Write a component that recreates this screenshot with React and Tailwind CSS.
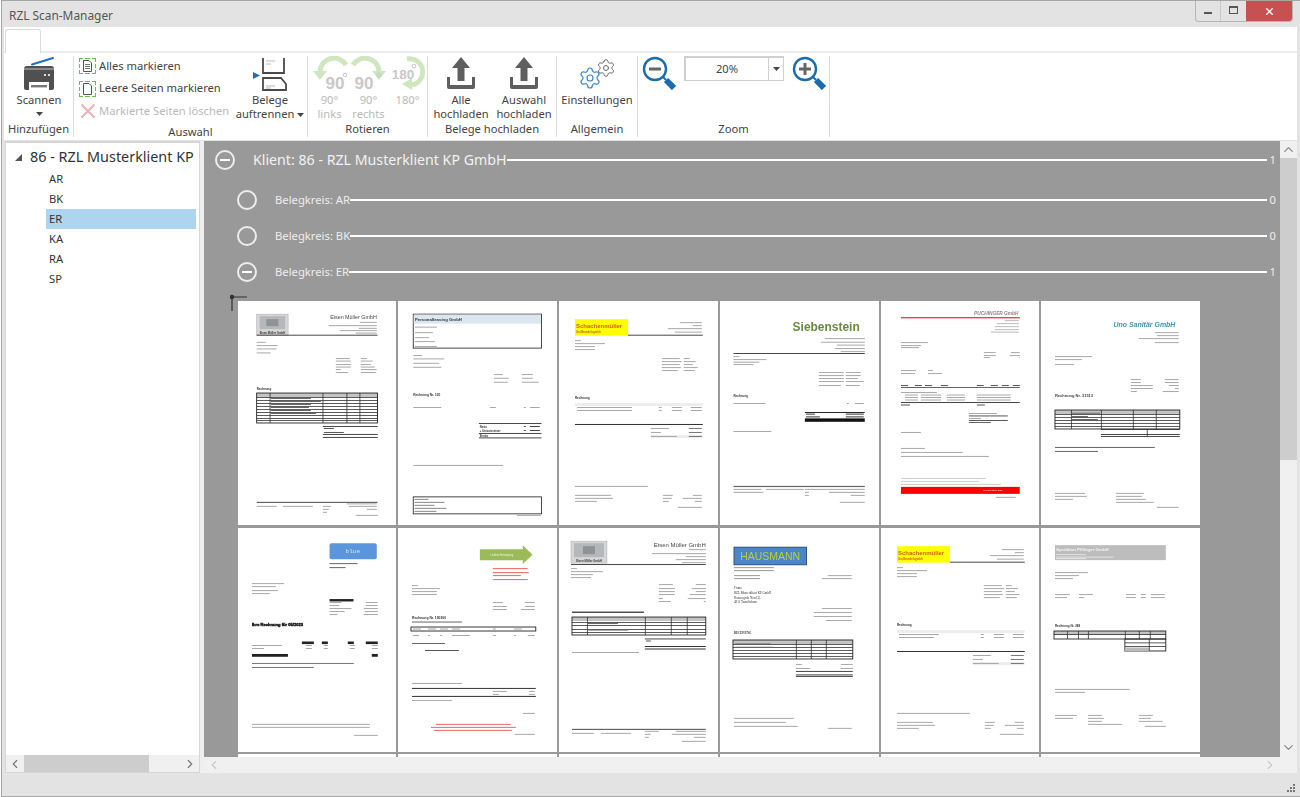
import React from "react";
import { ChevronUp, ChevronDown, ChevronLeft, ChevronRight, Settings, X } from "lucide-react";

/* ---------- thumbnail helpers ---------- */
const left = (x, rows, c = "#a8a8a8") =>
  rows.map(([y, w], i) => <rect key={`l${x}-${y}-${i}`} x={x} y={y} width={w} height={1} fill={c} />);
const right = (end, rows, c = "#a8a8a8") =>
  rows.map(([y, w], i) => <rect key={`r${end}-${y}-${i}`} x={end - w} y={y} width={w} height={1} fill={c} />);

const Hr = ({ x, y, w, h = 1, c = "#333" }) => <rect x={x} y={y} width={w} height={h} fill={c} />;

const Txt = ({ x, y, s = 4, c = "#333", a = "start", b, i, f, smudge, children }) => (
  <text
    x={x}
    y={y}
    fontSize={s}
    fill={c}
    stroke={smudge ? c : "none"}
    strokeWidth={smudge ? 0.4 : 0}
    textAnchor={a}
    fontWeight={b ? 700 : 400}
    fontStyle={i ? "italic" : "normal"}
    fontFamily={f || "Liberation Sans, sans-serif"}
  >
    {children}
  </text>
);

const Table = ({ x, y, w, h, cols, rows, head = 4, fill = "#c4c4c4" }) => (
  <g>
    <rect x={x} y={y} width={w} height={head} fill={fill} />
    {rows.map((r) => (
      <rect key={r} x={x} y={y + r} width={w} height={0.8} fill="#333" />
    ))}
    {cols.map((c) => (
      <rect key={c} x={x + c} y={y} width={0.8} height={h} fill="#333" />
    ))}
    <rect x={x} y={y} width={w} height={h} fill="none" stroke="#222" strokeWidth={0.9} />
  </g>
);

const MuellerLogo = ({ x, y, w, h }) => (
  <g>
    <rect x={x} y={y} width={w} height={h} fill="#d6d6d6" stroke="#aaa" strokeWidth={0.5} />
    <rect x={x + 3} y={y + 2} width={w - 6} height={h - 8} fill="#b5b8ba" />
    <rect x={x + w / 2 - 6} y={y + 5} width={12} height={h - 14} fill="#8f9396" />
    <Txt x={x + w / 2} y={y + h - 1.5} s={2.8} a="middle" b>Eisen Müller GmbH</Txt>
  </g>
);

const Schachen = ({ second }) => (
  <g>
    <rect x={16} y={18} width={53} height={16.5} fill="#ffff00" />
    <Txt x={17} y={27} s={6} c="#cc6000" b>Schachenmüller</Txt>
    <Txt x={17} y={32} s={2.8} c="#cc6000" b>Großhandelsgmbh</Txt>
    <Hr x={69} y={33.6} w={75} h={0.9} />
    {right(143, [[21, 22], [24, 9], [27, 34], [30.5, 27]])}
    {left(16, [[39, 6], [42, 30], [45, 20], [48, 20]])}
    {left(103, [[57, 18], [60, 20], [63, 18], [66, 19], [69, 16]])}
    {left(125, [[57, 6], [60, 12], [63, 9], [66, 14], [69, 11]])}
    <Txt x={16} y={98} s={3} b>Rechnung</Txt>
    <Hr x={16} y={102} w={128} h={3} c="#ededed" />
    {left(18, second ? [[106, 40], [109, 35]] : [[106, 55], [109, 55]])}
    {left(100, [[106, 3], [109, 3]])}
    {left(113, [[106, 10], [109, 10]])}
    {left(132, [[106, 11], [109, 11]])}
    <Hr x={16} y={123} w={128} h={1} />
    <Hr x={92} y={134} w={52} h={3} c="#ededed" />
    {left(92, [[127, 18], [131, 10], [135, 26]])}
    {left(130, [[127, 13], [131, 13], [135, 13]], "#777")}
    {left(16, [[185, 73]])}
    {left(16, [[194, 36], [197, 38], [200, 22]])}
    {left(104, [[194, 10], [197, 9], [200, 6]])}
    {right(143, [[194, 9], [197, 19], [200, 7]])}
    {right(143, [[206, 24]])}
  </g>
);

/* each page is a small drawing, coords are px inside the 159x224 sheet */
const PAGES = [
  <g key="p1">
    <MuellerLogo x={18.7} y={13} w={31.5} h={21} />
    <Txt x={139} y={17.5} s={5.4} a="end" c="#444">Eisen Müller GmbH</Txt>
    {right(139, [[20.7, 17], [24, 48], [26.7, 18], [29, 37], [31.5, 21]])}
    <Hr x={18.7} y={33.6} w={121} h={0.9} />
    {left(18.7, [[40.7, 9], [44, 21], [47.3, 20], [51.3, 14]])}
    {left(98, [[57, 14], [59.5, 15], [63, 15], [65.5, 15], [68, 5], [71, 12]])}
    {left(123, [[57, 6], [59.5, 12], [63, 10], [65.5, 14], [68, 16], [71, 15]])}
    <Txt x={18.7} y={89} s={3} b>Rechnung</Txt>
    <Table x={18.7} y={92} w={121} h={30} cols={[13, 66, 90, 103]} rows={[4, 7, 10, 13, 16, 19, 22, 25, 27]} />
    {left(33, [[97, 40], [100, 50], [103, 40], [106, 38], [109, 40], [112, 45]], "#666")}
    <Hr x={85} y={125} w={55} h={0.9} />
    {left(86, [[127, 10], [131, 20]], "#555")}
    <Hr x={85} y={133} w={55} h={0.9} />
    <Hr x={85} y={136} w={55} h={0.9} />
    <Hr x={18.7} y={201} w={121} h={0.9} />
    {left(18.7, [[205, 20]])}
    {left(45, [[205, 30]])}
    {left(85, [[205, 8], [208, 6], [211, 4]])}
    {right(139, [[202.5, 30], [205, 28], [208, 10]])}
    {right(140, [[214, 22]])}
  </g>,
  <g key="p2">
    <rect x={15.3} y={13} width={128.4} height={34} fill="#fff" stroke="#333" strokeWidth={0.9} />
    <rect x={15.8} y={13.5} width={127.4} height={9} fill="#dce6f1" />
    <Txt x={17} y={20} s={4.3} b>Personalleasing GmbH</Txt>
    {left(17, [[25.5, 22], [31, 18], [36, 14], [40, 20], [45, 22]])}
    {left(15.3, [[54, 9], [57.3, 31], [61.7, 26], [65.7, 28]])}
    {left(96, [[73, 9], [76.7, 15], [80.7, 14]])}
    {left(124, [[73, 11], [76.7, 11], [80.7, 17]])}
    <Txt x={15.3} y={95} s={3.2} b>Rechnung Nr. 320</Txt>
    {left(15.3, [[106, 28]])}
    {left(92, [[106, 6]])}
    {left(126, [[106, 2]])}
    {left(132, [[106, 10]])}
    <Hr x={81} y={122} w={62.7} h={0.9} />
    <Txt x={82} y={127} s={2.8} b>Netto</Txt>
    <Txt x={82} y={131} s={2.8} b>+ Umsatzsteuer</Txt>
    {left(126, [[125, 2], [129, 2]], "#444")}
    {left(132, [[125, 10], [129, 10]], "#444")}
    <Hr x={81} y={132} w={62.7} h={0.9} />
    <Hr x={81} y={136.5} w={62.7} h={0.9} />
    <Txt x={82} y={135.6} s={2.8} b>Brutto</Txt>
    {left(15.3, [[164, 90]])}
    <rect x={15.3} y={196} width={128.4} height={17} fill="#fff" stroke="#333" strokeWidth={0.9} />
    {left(16.5, [[198, 14], [201, 30], [204, 20], [207, 32], [210, 22]], "#888")}
    {right(143, [[214, 24]])}
  </g>,
  <g key="p3"><Schachen /></g>,
  <g key="p4">
    <Txt x={140} y={30} s={12} c="#6a8a45" a="end" b>Siebenstein</Txt>
    {right(145, [[37, 40], [40.6, 44], [43.5, 28], [47, 30], [50, 24]])}
    <Hr x={13.5} y={52} w={131.5} h={0.9} />
    {left(13.5, [[55, 6], [58, 33], [60.6, 26], [63, 20]])}
    {left(99, [[71, 25], [74, 25], [77, 25], [80, 25], [84, 22]])}
    {left(126, [[71, 15], [74, 15], [77, 12], [80, 18], [84, 14]])}
    <Txt x={13.5} y={96} s={3} b>Rechnung</Txt>
    {left(13.5, [[102, 32]])}
    {left(127, [[102, 2]])}
    {left(135, [[102, 9]])}
    <Hr x={85} y={111} w={60} h={0.9} c="#111" />
    {left(86, [[112.6, 9], [115.4, 14]], "#333")}
    {left(126, [[112.6, 18], [115.4, 18]], "#333")}
    <Hr x={85} y={117.4} w={60} h={3.4} c="#111" />
    {left(13.5, [[130, 38]])}
    <Hr x={13.5} y={185} w={131.5} h={1.2} c="#666" />
    {left(13.5, [[188, 28], [191, 30]])}
    {left(46, [[188, 38]])}
    {left(85, [[188, 22], [191, 4], [194, 4]])}
    {right(145, [[188, 38], [191, 36], [194, 14]])}
    {right(145, [[201, 25]])}
  </g>,
  <g key="p5">
    <Txt x={137.7} y={14} s={4.8} c="#888" a="end" b i>PUCHINGER GmbH</Txt>
    <Hr x={20} y={16} w={119} h={1.2} c="#ff2020" />
    {right(138, [[19, 14], [22, 22], [25, 24], [28, 24], [30.5, 28]], "#bbb")}
    {left(20, [[41, 27], [44, 20], [46, 18]])}
    {left(103, [[51, 12], [54, 12], [56, 6]])}
    {right(139, [[51, 9], [54, 10], [56, 1]])}
    {left(20, [[69, 15], [72, 14]])}
    {left(47, [[69, 5], [72, 14]])}
    {[20, 34, 44, 60, 96, 110, 121, 132].map((x) => (
      <rect key={x} x={x} y={84} width={7} height={1} fill="#555" />
    ))}
    <Hr x={20} y={86} w={119} h={0.9} c="#555" />
    {left(20, [[91, 36]])}
    {left(24, [[93.5, 13], [96, 13], [98.5, 13]])}
    {left(40, [[93.5, 20], [96, 20], [98.5, 20]])}
    {left(66, [[93.5, 18], [96, 18], [98.5, 18]])}
    {left(96, [[93.5, 34], [96, 34], [98.5, 34]])}
    <Hr x={20} y={101} w={119} h={1} c="#444" />
    {left(20, [[103.5, 9]], "#555")}
    {left(96, [[103.5, 8]], "#555")}
    {left(88, [[112, 28]])}
    <Hr x={88} y={114.5} w={39} h={0.9} c="#444" />
    {left(88, [[117, 12]])}
    <Hr x={88} y={119} w={39} h={0.9} c="#444" />
    {left(88, [[121, 22]], "#666")}
    {left(20, [[131, 20], [147, 24], [151, 62], [155, 88]])}
    {left(20, [[177, 85], [180, 78], [183, 100]], "#ccc")}
    <Hr x={20} y={186} w={119} h={7} c="#ff0000" />
    <Txt x={112} y={190.5} s={2} c="#fff" a="middle">Lieferant Online-Shop</Txt>
    {right(135, [[196, 20]])}
  </g>,
  <g key="p6">
    <Txt x={134.6} y={26} s={7} c="#3f94ad" a="end" b i>Uno Sanitär GmbH</Txt>
    {right(138, [[31, 24], [34, 22], [37, 40], [41, 24]])}
    {left(14, [[55, 37], [58, 27], [63, 19]])}
    {left(90, [[78, 10], [81, 10], [84, 22], [87, 22], [90, 6]])}
    {right(138, [[78, 14], [81, 14], [84, 10], [87, 4], [90, 16]])}
    <Txt x={14} y={96} s={4} b c="#444">Rechnung Nr. 31513</Txt>
    <Table x={14} y={109} w={125} h={19} cols={[16, 46, 78, 101]} rows={[4, 7, 10, 13, 16]} />
    {left(31, [[111.7, 28], [115, 16], [118, 26]], "#666")}
    <Hr x={60} y={128} w={79} h={0.9} />
    <Hr x={60} y={133} w={79} h={0.9} />
    <Hr x={60} y={135} w={79} h={0.9} />
    <Hr x={106} y={128} w={0.8} h={7} />
    {left(14, [[146, 100], [150, 43]], "#666")}
    {left(14, [[192, 30], [195, 32], [198, 18]])}
    {left(75, [[192, 28], [195, 26], [198, 30], [201, 38]])}
    {right(138, [[206, 22]])}
  </g>,
  <g key="p7">
    <rect x={91.7} y={15} width={47.3} height={16} rx={2} fill="#5b95dc" />
    <Txt x={115} y={25} s={6} c="#d6e6fa" a="middle" f="Liberation Mono, monospace">blue</Txt>
    {left(91.7, [[35, 28], [39, 16]], "#666")}
    {left(14, [[55, 32], [58, 24], [62, 26], [65, 18]])}
    <Hr x={91.7} y={71} w={24} h={2.4} c="#222" />
    {left(91.7, [[74, 12], [77, 10], [80, 22], [83, 15], [86, 8]])}
    {right(140, [[74, 12], [77, 12], [80, 14], [83, 13], [86, 14]])}
    <Txt x={14} y={98} s={4.1} c="#111" b smudge>Ihre Rechnung für 05/2023</Txt>
    {[64, 84, 110, 128].map((x) => (
      <rect key={x} x={x} y={113.5} width={x === 64 || x === 128 ? 12 : 6} height={2.6} fill="#222" />
    ))}
    {left(14, [[117, 30], [120, 12]])}
    {left(68, [[117, 6], [120, 6]])}
    {left(86, [[117, 4], [120, 4]])}
    {left(112, [[117, 5], [120, 5]])}
    {left(134, [[117, 6], [120, 6]])}
    <Hr x={14} y={126} w={36} h={2.8} c="#222" />
    <Hr x={134} y={126} w={6} h={2.8} c="#222" />
    {left(14, [[135, 102], [139, 62]], "#777")}
    {left(14, [[196, 118], [199, 118]])}
    {right(140, [[207, 24]])}
  </g>,
  <g key="p8">
    <polygon points="82,21 125,21 125,17 134.7,26.5 125,36 125,32 82,32" fill="#9bbb59" />
    <Txt x={104} y={28} s={2.6} c="#eef5de" a="middle">Lindner Entsorgung</Txt>
    {left(95, [[40, 35], [44, 36], [47, 28], [51, 35]], "#ee6666")}
    {left(14, [[57, 6], [60, 28], [63, 25], [66, 25]])}
    {left(95, [[74, 10], [78, 14], [81, 14]])}
    {right(137, [[74, 10], [78, 10], [81, 14]])}
    <Txt x={14} y={91} s={3.4} b>Rechnung Nr. 190300</Txt>
    {left(14, [[93.5, 50]], "#666")}
    <rect x={13} y={99} width={125} height={4} fill="#fff" stroke="#222" strokeWidth={0.9} />
    {left(15, [[100.5, 8], [107, 6]])}
    {left(30, [[100.5, 8], [107, 2]])}
    {left(42, [[100.5, 8], [107, 2]])}
    {left(54, [[100.5, 8], [107, 18]])}
    {left(95, [[100.5, 3], [107, 3]])}
    {left(116, [[100.5, 8], [107, 2]])}
    {left(130, [[107, 7]])}
    {left(14, [[115, 33]], "#666")}
    {left(27, [[122, 34]], "#555")}
    {left(14, [[155, 50]])}
    <Hr x={14} y={160} w={124} h={1} />
    {left(95, [[163, 14], [166, 6]])}
    {right(137, [[163, 6], [166, 6]])}
    <Hr x={14} y={168} w={124} h={1} />
    {left(14, [[172, 40]])}
    {right(137, [[185, 12]])}
    {left(38, [[196, 75]], "#ee6666")}
    {left(33, [[199, 85]], "#ee6666")}
    {left(36, [[202, 78]], "#ee6666")}
    {right(137, [[206, 20]])}
  </g>,
  <g key="p9">
    <MuellerLogo x={12} y={13} w={36} h={22} />
    <Txt x={147} y={19} s={6} a="end" c="#444">Eisen Müller GmbH</Txt>
    {right(147, [[21, 17], [25, 54], [28, 20], [31, 30], [34, 24]])}
    <Hr x={12} y={36} w={135} h={0.9} />
    {left(12, [[40, 6], [43, 32], [46, 22], [49, 20]])}
    {left(100, [[56, 14], [60, 16], [63, 16], [66, 16], [70, 4], [73, 12]])}
    {right(147, [[56, 10], [60, 14], [63, 10], [66, 16], [70, 18], [73, 2]])}
    <Hr x={13} y={83.5} w={72} h={1.4} c="#444" />
    <Table x={13} y={89} w={134} h={18} cols={[15, 73, 99, 115]} rows={[5, 8, 12, 15]} />
    {left(29, [[95, 30], [101.5, 40]], "#666")}
    <Hr x={86} y={110.5} w={61} h={0.9} />
    {left(87, [[112.5, 5]], "#555")}
    <Hr x={86} y={118} w={61} h={1} />
    <Hr x={86} y={120.5} w={61} h={1} />
    {left(13, [[124, 67]])}
    <Hr x={13} y={201} w={134} h={0.9} />
    {left(13, [[205, 22]])}
    {left(42, [[205, 30]])}
    {left(86, [[203, 14], [206, 6], [209, 4]])}
    {right(147, [[203, 30], [206, 34], [209, 12]])}
    {right(147, [[213, 24]])}
  </g>,
  <g key="p10">
    <rect x={14} y={19} width={72.7} height={17.7} fill="#4a86c8" stroke="#1f3f66" strokeWidth={0.8} />
    <Txt x={50.3} y={32} s={10.5} c="#b9cf3c" a="middle">HAUSMANN</Txt>
    {left(14, [[39, 40], [42, 40], [47, 26], [50, 26]], "#999")}
    {right(132, [[47, 24], [50, 30]])}
    <Txt x={14} y={61} s={3.2} f="Liberation Serif, serif">Firma</Txt>
    <Txt x={14} y={66} s={3.2} f="Liberation Serif, serif">RZL Musterklient KP GmbH</Txt>
    <Txt x={14} y={70.5} s={3.2} f="Liberation Serif, serif">Hannergrub Nord 35</Txt>
    <Txt x={14} y={75} s={3.2} f="Liberation Serif, serif">4911  Tumeltsham</Txt>
    {right(132, [[80, 30], [84, 38], [88, 38], [92, 26]])}
    <Txt x={14} y={106} s={3} b f="Liberation Serif, serif">RECHNUNG</Txt>
    <Table x={13} y={112} w={120} h={19} cols={[63, 78, 93]} rows={[4, 7, 10, 13, 16]} />
    {left(15, [[115.5, 36], [118.8, 38]], "#666")}
    {left(76, [[136, 6], [140, 14]])}
    {right(133, [[136, 12], [140, 12]])}
    <Hr x={76} y={143} w={57} h={0.9} />
    <Hr x={76} y={146.5} w={57} h={0.9} />
    <Hr x={76} y={148} w={57} h={0.9} />
    {left(14, [[190, 60], [194, 52], [198, 64]])}
    {right(132, [[200, 24]])}
  </g>,
  <g key="p11"><Schachen second /></g>,
  <g key="p12">
    <rect x={14} y={17} width={111} height={15} fill="#bdbdbd" />
    <Txt x={15} y={23} s={4.4} c="#f4f4f4" b>Spedition Pillinger GmbH</Txt>
    {left(15, [[26, 30], [28.5, 58], [30, 30]], "#e4e4e4")}
    {left(14, [[44, 33], [47, 24], [50, 18]])}
    {left(14, [[66, 15], [69, 12]])}
    {left(38, [[66, 14], [69, 5]])}
    {left(85, [[66, 10], [69, 10]])}
    {left(100, [[66, 5], [69, 5]])}
    {left(110, [[66, 14], [69, 14]])}
    <Txt x={14} y={99} s={3} b>Rechnung Nr. 288</Txt>
    <Table x={13} y={103} w={112} h={8} cols={[13, 24, 34, 71, 85, 96]} rows={[3]} />
    <rect x={84} y={111} width={41} height={12} fill="none" stroke="#222" strokeWidth={0.9} />
    <rect x={84} y={119.5} width={24} height={3.5} fill="#bbb" />
    <Hr x={84} y={114.5} w={41} h={0.8} />
    <Hr x={84} y={118} w={41} h={0.8} />
    <Hr x={108} y={111} w={0.8} h={12} />
    {left(14, [[161, 75], [164, 30]])}
    {left(14, [[187, 22], [190, 18]])}
    {left(47, [[187, 14], [190, 16], [193, 14], [196, 34]])}
    {left(98, [[187, 14], [190, 12], [193, 24]])}
    {right(125, [[198, 21]])}
  </g>,
];

const Page = ({ children }) => (
  <div className="h-[224px] bg-white overflow-hidden">
    <svg viewBox="0 0 159 224" className="w-full h-full blur-[0.4px]">
      {children}
    </svg>
  </div>
);

/* ---------- ribbon icons ---------- */
const ScannerIcon = () => (
  <svg width="34" height="36" viewBox="0 0 34 36">
    <path d="M10 8.500L31 2" stroke="#1f6fc0" strokeWidth="2" strokeLinecap="round" />
    <path d="M2 13a3 3 0 0 1 3-3h24a3 3 0 0 1 3 3v19a2 2 0 0 1-2 2H4a2 2 0 0 1-2-2z" fill="#505050" />
    <rect x="2" y="12" width="30" height="2" fill="#8a8a8a" />
    <rect x="22" y="18" width="2" height="2" fill="#ddd" />
    <rect x="26" y="18" width="2" height="2" fill="#ddd" />
    <rect x="7" y="26" width="20" height="8" fill="#fff" />
    <rect x="9" y="29" width="16" height="2.400" fill="#777" />
  </svg>
);

const SelectIcon = ({ lines }) => (
  <svg width="17" height="16" viewBox="0 0 17 16">
    <path
      d="M.5 4V.5H4M6 .5h5M13 .5h3.500V4M16.500 6v4M16.500 12v3.500H13M11 15.500H6M4 15.500H.5V12M.5 10V6"
      fill="none"
      stroke="#6dbb54"
      strokeWidth="1.100"
    />
    <path d="M4.500 2.500h5.500l2.500 2.500v8.500h-8z" fill="#fff" stroke="#555" strokeWidth="1" />
    {lines && <path d="M6 6.500h5M6 8.500h5M6 10.500h5" stroke="#666" strokeWidth="0.9" />}
  </svg>
);

const DeleteIcon = () => (
  <svg width="16" height="16" viewBox="0 0 16 16">
    <path d="M1.500 1.500l13 13M14.500 1.500l-13 13" stroke="#f0b4b4" strokeWidth="2.200" />
  </svg>
);

const SplitIcon = () => (
  <svg width="36" height="36" viewBox="0 0 36 36">
    <path d="M11 2v15h21V2" fill="none" stroke="#4a4a4a" strokeWidth="1.800" />
    <path d="M14 5h9M14 8h5" stroke="#bbb" strokeWidth="1.200" />
    <path d="M11 34V22h18l5 6v6z" fill="none" stroke="#4a4a4a" strokeWidth="1.800" />
    <path d="M14 30h9M14 32h5" stroke="#bbb" strokeWidth="1" />
    <path d="M1 16l7 3.500-7 3.500z" fill="#1f6fc0" />
  </svg>
);

const RotateIcon = ({ label, flip }) => (
  <svg width="36" height="36" viewBox="0 0 36 36">
    <path
      d={flip ? "M2 9A14 14 0 0 1 28 15" : "M34 9A14 14 0 0 0 8 15"}
      fill="none"
      stroke="#cfe6bf"
      strokeWidth="5"
    />
    <path d={flip ? "M21 15h14l-7 9z" : "M1 15h14l-7 9z"} fill="#cfe6bf" />
    <text
      x={flip ? 13 : 23}
      y="33"
      textAnchor="middle"
      fontSize="17"
      fontWeight="700"
      fill="#c8c8c8"
      fontFamily="Liberation Sans, sans-serif"
    >
      {label}
    </text>
    <circle cx={flip ? 28 : 33} cy="19" r="1.800" fill="none" stroke="#c8c8c8" />
  </svg>
);

const Rotate180Icon = () => (
  <svg width="36" height="36" viewBox="0 0 36 36">
    <path d="M17 3A13 13 0 0 1 22 29" fill="none" stroke="#cfe6bf" strokeWidth="5" />
    <path d="M22 22v12l-10-6z" fill="#cfe6bf" />
    <text
      x="13"
      y="23"
      textAnchor="middle"
      fontSize="13.500"
      fontWeight="700"
      fill="#c8c8c8"
      fontFamily="Liberation Sans, sans-serif"
    >
      180
    </text>
    <circle cx="24" cy="10" r="1.800" fill="none" stroke="#c8c8c8" />
  </svg>
);

const UploadIcon = () => (
  <svg width="34" height="36" viewBox="0 0 34 36">
    <path d="M17 1l9 11h-5.500v13h-7V12H8z" fill="#5f5f5f" />
    <path d="M3 21v10a2 2 0 0 0 2 2h24a2 2 0 0 0 2-2V21h-3v8H6v-8z" fill="#5f5f5f" />
  </svg>
);

const ZoomIcon = ({ plus }) => (
  <svg width="34" height="34" viewBox="0 0 34 34">
    <circle cx="13" cy="13" r="11" fill="#fff" stroke="#1a6cb0" strokeWidth="2.400" />
    <rect x="7" y="11.500" width="12" height="3" fill="#666" />
    {plus && <rect x="11.500" y="7" width="3" height="12" fill="#666" />}
    <path d="M21 21l3 3" stroke="#1a6cb0" strokeWidth="2" />
    <path d="M24 24l8 8" stroke="#1a6cb0" strokeWidth="6" />
  </svg>
);

const Caret = () => (
  <svg width="7" height="4" viewBox="0 0 7 4" className="inline-block">
    <path d="M0 0h7L3.500 4z" fill="#444" />
  </svg>
);

const RibbonGroup = ({ w, label, children }) => (
  <div className="flex flex-col h-[81px] border-r border-[#dcdcdc] shrink-0" style={{ width: w }}>
    <div className="flex h-[67px]">{children}</div>
    <div className="text-center pt-[1px] leading-[16px] text-[#444] text-[11.200px] whitespace-nowrap">{label}</div>
  </div>
);

const BigButton = ({ w, icon, lines, caret, disabled }) => (
  <div className="flex flex-col items-center shrink-0" style={{ width: w }}>
    <div className="h-[37px] flex items-start justify-center">{icon}</div>
    {lines.map((l) => (
      <div
        key={l}
        className={`leading-[13.500px] text-[11.200px] whitespace-nowrap ${disabled ? "text-[#b9b9b9]" : "text-[#444]"}`}
      >
        {l}
      </div>
    ))}
    {caret && (
      <div className="leading-[13px] h-[13px]">
        <Caret />
      </div>
    )}
  </div>
);

const SmallRow = ({ icon, label, disabled }) => (
  <div className="flex items-center gap-[3px] h-[22.500px]">
    <div className="w-[17px] flex justify-center">{icon}</div>
    <span className={`text-[11.200px] whitespace-nowrap ${disabled ? "text-[#b9b9b9]" : "text-[#444]"}`}>{label}</span>
  </div>
);

/* ---------- main panel rows ---------- */
const Toggle = ({ open }) => (
  <div className="w-[20px] h-[20px] rounded-full border-2 border-[#ededed] flex items-center justify-center shrink-0">
    {open && <div className="w-[10px] h-[2px] bg-white" />}
  </div>
);

const GroupRow = ({ label, count, open }) => (
  <div className="flex items-center h-[36px] pl-[33px] pr-[4px]">
    <Toggle open={open} />
    <span className="ml-[18px] text-[11.250px] text-[#eee] whitespace-nowrap">{label}</span>
    <div className="flex-1 h-[2px] bg-white" />
    <span className="ml-[3px] text-[11.200px] text-[#eee]">{count}</span>
  </div>
);

const TREE = ["AR", "BK", "ER", "KA", "RA", "SP"];

export default function App() {
  return (
    <div className="w-[1300px] h-[797px] overflow-hidden bg-white pl-[1px] font-['Noto_Sans',sans-serif]">
      <div className="h-[797px] flex flex-col bg-[#e3e3e3] border-l border-t border-b border-[#a6a6a6]">
        {/* Title bar */}
        <div className="h-[26px] flex justify-between shrink-0">
          <span className="ml-[7px] mt-[5px] text-[11.900px] leading-[18px] text-[#555]">RZL Scan-Manager</span>
          <div className="flex h-[21px] mr-[7px] border border-t-0 border-[#b4b4b4] rounded-b-[4px] overflow-hidden">
            <div className="w-[25px] flex items-center justify-center border-r border-[#c9c9c9]">
              <div className="w-[8px] h-[2px] bg-[#555] mt-[4px]" />
            </div>
            <div className="w-[25px] flex items-center justify-center">
              <div className="w-[9px] h-[8px] border border-t-2 border-[#555] mb-[2px]" />
            </div>
            <div className="w-[46px] bg-[#c75050] flex items-center justify-center">
              <X size={11} color="#fff" strokeWidth={3} />
            </div>
          </div>
        </div>

        {/* Tab strip */}
        <div className="h-[26px] ml-[2px] mr-[3px] bg-white border-b-2 border-[#ececec] shrink-0">
          <div className="ml-[1px] mt-[2px] w-[36px] h-[24px] bg-white border border-b-0 border-[#dcdcdc] rounded-t-[3px]" />
        </div>

        {/* Ribbon */}
        <div className="h-[87px] ml-[2px] mr-[3px] pt-[3px] bg-white flex shrink-0">
          <RibbonGroup w={70} label="Hinzufügen">
            <BigButton w={70} icon={<ScannerIcon />} lines={["Scannen"]} caret />
          </RibbonGroup>
          <RibbonGroup w={234} label="Auswahl">
            <div className="w-[166px] pl-[5px] -mt-[1px]">
              <SmallRow icon={<SelectIcon lines />} label="Alles markieren" />
              <SmallRow icon={<SelectIcon />} label="Leere Seiten markieren" />
              <SmallRow icon={<DeleteIcon />} label="Markierte Seiten löschen" disabled />
            </div>
            <div className="flex flex-col items-center w-[60px]">
              <div className="h-[37px]"><SplitIcon /></div>
              <div className="leading-[13.500px] text-[11.200px] text-[#444]">Belege</div>
              <div className="leading-[13.500px] text-[11.200px] text-[#444] whitespace-nowrap">
                auftrennen <Caret />
              </div>
            </div>
          </RibbonGroup>
          <RibbonGroup w={120} label="Rotieren">
            <div className="flex pl-[2px]">
              <BigButton w={39} icon={<RotateIcon label="90" />} lines={["90°", "links"]} disabled />
              <BigButton w={39} icon={<RotateIcon label="90" flip />} lines={["90°", "rechts"]} disabled />
              <BigButton w={39} icon={<Rotate180Icon />} lines={["180°"]} disabled />
            </div>
          </RibbonGroup>
          <RibbonGroup w={129} label="Belege hochladen">
            <div className="flex">
              <BigButton w={66} icon={<UploadIcon />} lines={["Alle", "hochladen"]} />
              <BigButton w={60} icon={<UploadIcon />} lines={["Auswahl", "hochladen"]} />
            </div>
          </RibbonGroup>
          <RibbonGroup w={81} label="Allgemein">
            <div className="flex flex-col items-center w-[80px]">
              <div className="h-[37px] w-[36px] relative">
                <Settings size={24} color="#3b87c9" strokeWidth={1.2} className="absolute left-[-1px] top-[10px]" />
                <Settings size={20} color="#6a6a6a" strokeWidth={1.2} className="absolute left-[17px] top-[2px]" />
              </div>
              <div className="leading-[13.500px] text-[11.200px] text-[#444] whitespace-nowrap">Einstellungen</div>
            </div>
          </RibbonGroup>
          <RibbonGroup w={192} label="Zoom">
            <div className="flex items-start pl-[4px]">
              <ZoomIcon />
              <div className="ml-[8px] w-[100px] h-[25px] flex border-2 border-r border-b border-[#d0d0d0] bg-white">
                <div className="flex-1 text-center text-[11.200px] leading-[22px] text-[#444]">20%</div>
                <div className="w-[15px] border-l border-[#cfcfcf] flex items-center justify-center">
                  <Caret />
                </div>
              </div>
              <div className="ml-[8px]">
                <ZoomIcon plus />
              </div>
            </div>
          </RibbonGroup>
        </div>

        {/* Body */}
        <div className="flex-1 min-h-0 flex mt-[1px] ml-[2px]">
          {/* Tree */}
          <div className="w-[195px] h-[632px] bg-white border border-t-2 border-[#d6d6d6] flex flex-col shrink-0 ml-[1px]">
            <div className="flex-1 min-h-0 overflow-hidden pr-[3px]">
              <div className="flex items-center h-[25px] mt-[1px] pl-[9px]">
                <svg width="7" height="7" viewBox="0 0 7 7" className="mr-[8px] mt-[1px]">
                  <path d="M7 0v7H0z" fill="#555" />
                </svg>
                <span className="text-[14.400px] text-[#333] whitespace-nowrap">86 - RZL Musterklient KP</span>
              </div>
              {TREE.map((t) => (
                <div
                  key={t}
                  className={`ml-[40px] h-[20px] leading-[19px] pl-[3px] text-[11.200px] text-[#333] ${t === "ER" ? "bg-[#aed4ef]" : ""}`}
                >
                  {t}
                </div>
              ))}
            </div>
            <div className="h-[17px] bg-[#f0f0f0] flex shrink-0">
              <div className="w-[18px] flex items-center justify-center">
                <ChevronLeft size={14} color="#777" />
              </div>
              <div className="w-[125px] bg-[#cdcdcd]" />
              <div className="flex-1 flex items-center justify-end pr-[2px]">
                <ChevronRight size={14} color="#777" />
              </div>
            </div>
          </div>

          {/* Splitter */}
          <div className="w-[4px] h-[632px] bg-[#efefef] shrink-0" />

          {/* Main */}
          <div className="w-[1093px] h-[632px] flex flex-col">
            <div className="flex h-[616px]">
              <div className="w-[1076px] bg-[#999999] overflow-hidden">
                <div className="flex items-center h-[38px] pl-[11px] pr-[4px]">
                  <Toggle open />
                  <span className="ml-[18px] text-[14.200px] text-[#f2f2f2] whitespace-nowrap">
                    Klient: 86 - RZL Musterklient KP GmbH
                  </span>
                  <div className="flex-1 h-[2px] bg-white" />
                  <span className="ml-[3px] text-[11.200px] text-[#eee]">1</span>
                </div>
                <div className="mt-[3px]">
                  <GroupRow label="Belegkreis: AR" count="0" />
                  <GroupRow label="Belegkreis: BK" count="0" />
                  <GroupRow label="Belegkreis: ER" count="1" open />
                </div>
                <div className="relative ml-[33.500px] mt-[11px] w-[962.500px]">
                  <svg width="18" height="18" viewBox="0 0 18 18" className="absolute left-[-7.500px] top-[-7px]">
                    <path d="M2 3H17M2 3v14" stroke="#333" strokeWidth="1.200" fill="none" />
                    <circle cx="2" cy="3" r="2.300" fill="#333" />
                  </svg>
                  <div className="grid grid-cols-6 gap-x-[2px] gap-y-[2.500px]">
                    {PAGES.map((p) => (
                      <Page key={p.key}>{p}</Page>
                    ))}
                    {[0, 1, 2, 3, 4, 5].map((i) => (
                      <Page key={i} />
                    ))}
                  </div>
                </div>
              </div>
              <div className="w-[17px] bg-[#f0f0f0] flex flex-col shrink-0">
                <div className="h-[17px] flex items-center justify-center">
                  <ChevronUp size={15} color="#888" />
                </div>
                <div className="h-[302px] bg-[#cdcdcd]" />
                <div className="flex-1 flex items-end justify-center pb-[2px]">
                  <ChevronDown size={15} color="#888" />
                </div>
              </div>
            </div>
            <div className="h-[16px] bg-[#f0f0f0] flex items-center justify-between pl-[3px] pr-[20px]">
              <ChevronLeft size={14} color="#c8c8c8" />
              <ChevronRight size={14} color="#c8c8c8" />
            </div>
          </div>
        </div>

        {/* Status bar */}
        <div className="h-[22px] flex justify-end items-end pr-[4px] pb-[3px] shrink-0">
          <svg width="10" height="10" viewBox="0 0 10 10">
            <path d="M7 1h2v2H7zM4 4h2v2H4zM7 4h2v2H7zM1 7h2v2H1zM4 7h2v2H4zM7 7h2v2H7z" fill="#777" />
          </svg>
        </div>
      </div>
    </div>
  );
}
